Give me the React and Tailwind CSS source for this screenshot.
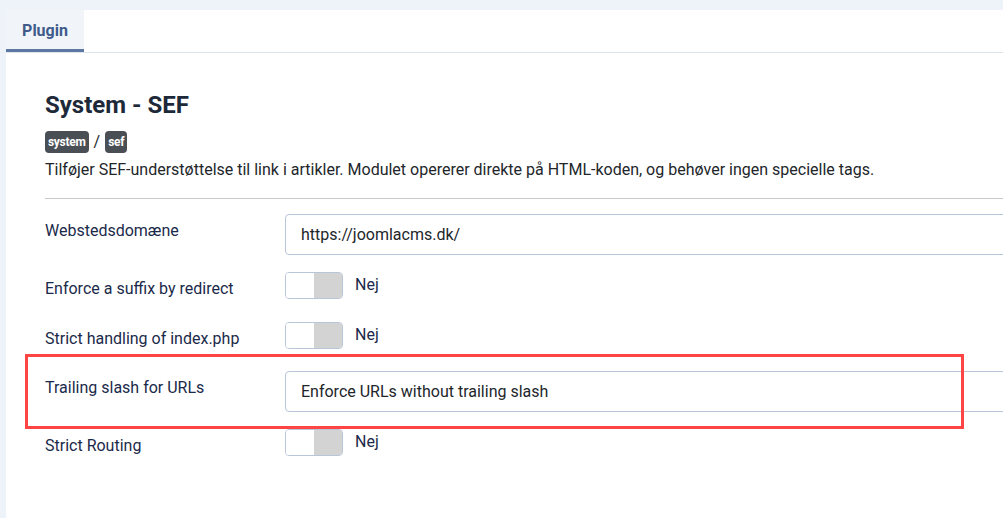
import React from "react";

const Toggle = () => (
  <div className="flex items-center">
    <div className="flex w-[58px] h-[27px] border border-[#b9c6da] rounded-[4px] overflow-hidden">
      <span className="w-1/2 bg-white" />
      <span className="w-1/2 bg-[#d3d3d3]" />
    </div>
    <span className="ml-[12px] -mt-[2px] text-[16px] text-[#1b2a4a]">Nej</span>
  </div>
);

const TextField = ({ value }) => (
  <div className="w-[760px] h-[41px] border border-[#b9c6da] rounded-[4px] flex items-center pl-[15px] text-[16px] text-[#22262a]">
    {value}
  </div>
);

const Row = ({ label, height, children }) => (
  <div className={`flex ${height}`}>
    <div className="w-[240px] pt-[5px] text-[16px] leading-[24px] text-[#1b2a4a]">{label}</div>
    <div>{children}</div>
  </div>
);

const App = () => {
  return (
    <div
      className="relative w-[1003px] h-[518px] overflow-hidden bg-[#eef2f9] pt-[10px] pl-[6px]"
      style={{ fontFamily: "Roboto, 'Noto Sans', sans-serif" }}
    >
      <div className="w-[1100px] h-[520px] bg-white">
        {/* tab bar */}
        <div className="flex h-[43px] border-b border-[#dde3ec]">
          <div className="w-[78px] bg-[#f1f4f9] border-b-[3px] border-[#5b77a2] flex items-center justify-center text-[16px] font-bold text-[#3e5b8a] pt-[2px]">
            Plugin
          </div>
        </div>

        <div className="pl-[39px] pt-[38px]">
          <h1 className="text-[24px] leading-[29px] font-bold text-[#1d2939]">System - SEF</h1>
          <div className="flex items-center mt-[11px] h-[22px] text-[16px] text-[#22262a]">
            <span className="bg-[#4a4e55] text-white text-[12px] font-bold rounded-[4px] px-[3px] h-[22px] flex items-center tracking-[-0.3px]">
              system
            </span>
            <span className="mx-[5px]">/</span>
            <span className="bg-[#4a4e55] text-white text-[12px] font-bold rounded-[4px] px-[3px] h-[22px] flex items-center tracking-[-0.3px]">
              sef
            </span>
          </div>
          <p className="mt-[5px] text-[16px] leading-[24px] text-[#22262a]">
            Tilføjer SEF-understøttelse til link i artikler. Modulet opererer direkte på HTML-koden, og behøver ingen specielle tags.
          </p>
          <hr className="mt-[16px] border-t border-[#c9c9c9]" />

          <div className="mt-[15px]">
            <Row label="Webstedsdomæne" height="h-[58px]">
              <TextField value="https://joomlacms.dk/" />
            </Row>
            <Row label="Enforce a suffix by redirect" height="h-[50px]">
              <Toggle />
            </Row>
            <Row label="Strict handling of index.php" height="h-[49px]">
              <Toggle />
            </Row>
            <Row label="Trailing slash for URLs" height="h-[58px]">
              <TextField value="Enforce URLs without trailing slash" />
            </Row>
            <Row label="Strict Routing" height="h-[58px]">
              <Toggle />
            </Row>
          </div>
        </div>
      </div>

      {/* highlight box drawn over the form */}
      <div className="absolute left-[25px] top-[354px] w-[939px] h-[75px] border-[3px] border-[#ff4444]" />
    </div>
  );
};

export default App;
